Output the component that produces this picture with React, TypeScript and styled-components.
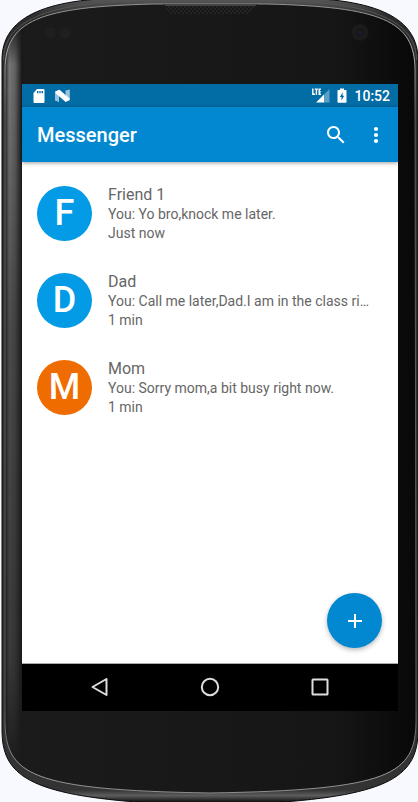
import React from "react";
import styled, { createGlobalStyle } from "styled-components";

const GlobalStyle = createGlobalStyle`
  *, *::before, *::after { box-sizing: border-box; }
  html { background: #f8f9ff; }
  body { margin: 0; font-family: Roboto, "Noto Sans", sans-serif; }
  button { border: 0; padding: 0; background: none; color: inherit; font: inherit; cursor: pointer; }
`;

const Phone = styled.div`
  position: relative;
  display: flex;
  min-height: 100vh;
  padding: 84px 20px 91px 22px;
  overflow: hidden;
`;

const Shell = styled.svg`
  position: absolute;
  inset: 0;
  width: 100%;
  height: 100%;
`;

const Screen = styled.div`
  position: relative;
  display: flex;
  flex: 1;
  min-width: 0;
  flex-direction: column;
  background: #fff;
`;

const StatusBar = styled.div`
  display: flex;
  align-items: center;
  justify-content: space-between;
  height: 23px;
  padding: 0 8px 0 11px;
  background: #026ca5;
  color: #fff;
`;

const StatusGroup = styled.div<{ $gap: number }>`
  display: flex;
  align-items: center;
  gap: ${(p) => p.$gap}px;
`;

const Clock = styled.time`
  font-size: 14px;
  font-weight: 500;
  line-height: 24px;
`;

const Toolbar = styled.header`
  position: relative;
  display: flex;
  align-items: center;
  height: 55px;
  padding: 0 10px 0 15px;
  background: #0288d1;
  color: #fff;
  box-shadow: 0 1px 4px rgba(0, 0, 0, 0.4);
`;

const Title = styled.h1`
  flex: 1;
  margin: 0;
  font-size: 20px;
  font-weight: 500;
`;

const ToolButton = styled.button<{ $width: number }>`
  display: grid;
  place-items: center;
  width: ${(p) => p.$width}px;
  height: 40px;
`;

const ChatList = styled.ul`
  flex: 1;
  margin: 0;
  padding: 8px 0;
  list-style: none;
`;

const ChatRow = styled.li`
  display: flex;
  align-items: center;
  gap: 16px;
  height: 87px;
  padding: 0 20px 0 15px;
`;

const Avatar = styled.div<{ $color: string }>`
  display: grid;
  place-items: center;
  flex: none;
  width: 55px;
  height: 55px;
  border-radius: 50%;
  background: ${(p) => p.$color};
  color: #fff;
  font-size: 36px;
  font-weight: 500;
  line-height: 55px;
`;

const ChatText = styled.div`
  flex: 1;
  min-width: 0;
  color: #666;
`;

const Name = styled.h2`
  margin: 0;
  font-size: 16px;
  font-weight: 400;
  line-height: 20px;
`;

const Line = styled.p`
  margin: 0;
  overflow: hidden;
  font-size: 14px;
  line-height: 19px;
  text-overflow: ellipsis;
  white-space: nowrap;
`;

const ComposeButton = styled.button`
  position: absolute;
  right: 16px;
  bottom: 63px;
  display: grid;
  place-items: center;
  width: 55px;
  height: 55px;
  border-radius: 50%;
  background: #0288d1;
  box-shadow: 0 2px 5px rgba(0, 0, 0, 0.28);
`;

const NavBar = styled.nav`
  display: flex;
  justify-content: center;
  height: 48px;
  border-top: 1px solid #aaa;
  background: #000;
`;

const NavButton = styled.button`
  display: grid;
  place-items: center;
  width: 110px;
  height: 46px;
`;

const OUTER =
  "M2 60 C2 28 25 0 120 -2 L300 -2 C395 0 418 28 418 60 L418 730 C418 775 392 795 270 803 L150 803 C28 795 2 775 2 730 Z";
const INNER =
  "M5 70 C5 20 40 7 153 4 L267 4 C380 7 415 20 415 70 L416 720 C416 775 390 790 210 793 C30 790 5 775 5 720 Z";

function PhoneShell() {
  return (
    <Shell viewBox="0 0 418 802" preserveAspectRatio="none" aria-hidden="true">
      <defs>
        <linearGradient id="side" x1="5" x2="22" y1="0" y2="0" gradientUnits="userSpaceOnUse">
          <stop offset="0" stopColor="#222" />
          <stop offset="0.25" stopColor="#777" />
          <stop offset="0.6" stopColor="#606060" />
          <stop offset="1" stopColor="#181818" />
        </linearGradient>
        <linearGradient id="fall" x1="0" x2="0" y1="20" y2="770" gradientUnits="userSpaceOnUse">
          <stop offset="0" stopColor="#fff" stopOpacity="0" />
          <stop offset="0.06" stopColor="#fff" stopOpacity="1" />
          <stop offset="0.15" stopColor="#fff" stopOpacity="0.9" />
          <stop offset="0.4" stopColor="#fff" stopOpacity="0.55" />
          <stop offset="0.85" stopColor="#fff" stopOpacity="0.35" />
          <stop offset="1" stopColor="#fff" stopOpacity="0" />
        </linearGradient>
        <linearGradient id="face" x1="0" x2="1" y1="0" y2="0">
          <stop offset="0" stopColor="#1b1b1b" />
          <stop offset="0.8" stopColor="#161616" />
          <stop offset="1" stopColor="#080808" />
        </linearGradient>
        <linearGradient id="rim" x1="0" x2="0" y1="0" y2="802" gradientUnits="userSpaceOnUse">
          <stop offset="0" stopColor="#555" />
          <stop offset="0.02" stopColor="#2c2c2c" />
          <stop offset="0.985" stopColor="#333" />
          <stop offset="0.992" stopColor="#5c5c5c" />
          <stop offset="1" stopColor="#111" />
        </linearGradient>
        <linearGradient id="edge" x1="0" x2="0" y1="0" y2="802" gradientUnits="userSpaceOnUse">
          <stop offset="0" stopColor="#909090" />
          <stop offset="0.07" stopColor="#a8a8a8" />
          <stop offset="0.15" stopColor="#606060" />
          <stop offset="0.88" stopColor="#555" />
          <stop offset="0.96" stopColor="#999" />
          <stop offset="1" stopColor="#888" />
        </linearGradient>
        <mask id="fade">
          <rect width="24" height="802" fill="url(#fall)" />
        </mask>
        <clipPath id="faceClip">
          <path d={INNER} />
        </clipPath>
        <pattern id="mesh" width="4" height="4" patternUnits="userSpaceOnUse">
          <rect width="4" height="4" fill="#242424" />
          <circle cx="1" cy="1" r="1" fill="#121212" />
          <circle cx="3" cy="3" r="1" fill="#121212" />
        </pattern>
      </defs>
      <path d={OUTER} fill="url(#rim)" stroke="#0a0a0a" strokeWidth="1" />
      <path d="M3.500 60 C4 25 38 4 130 1 L290 1 C382 4 416 25 416.500 60" fill="none" stroke="#555" />
      <path d={INNER} fill="url(#face)" />
      <g clipPath="url(#faceClip)">
        <rect x="4" width="19" height="802" fill="url(#side)" mask="url(#fade)" />
      </g>
      <path d={INNER} fill="none" stroke="url(#edge)" />
      <path d="M163 4 L169 12 Q170 14 175 14 L244 14 Q249 14 251 11 L258 4 Z" fill="url(#mesh)" />
      <path d="M163 4 L166 6 L255 6 L258 4" fill="#444" />
      <circle cx="50.500" cy="33" r="5.500" fill="#1f1f1f" />
      <circle cx="65" cy="33" r="5.500" fill="#1f1f1f" />
      <circle cx="360" cy="32.500" r="8.500" fill="#1b1b1c" />
      <circle cx="360" cy="32.500" r="3.500" fill="#17171b" />
      <circle cx="360" cy="32.500" r="1.500" fill="#231f33" />
    </Shell>
  );
}

const SdCardIcon = () => (
  <svg width="12" height="14" viewBox="0 0 12 14" aria-label="SD card">
    <path
      fill="#fff"
      fillRule="evenodd"
      d="M4 0H10.500Q11.500 0 11.500 1V13Q11.500 14 10.500 14H1.500Q.5 14 .5 13V4ZM4 2V4.300H5.400V2ZM6.300 2V4.300H7.700V2ZM8.600 2V4.300H10V2Z"
    />
  </svg>
);

const NougatIcon = () => (
  <svg width="15" height="14" viewBox="0 0 15 14" aria-label="Android N">
    <path fill="#9ac4dc" d="M0 2.500L4 1V13L0 11.500ZM10.500 1.500L14.800 .5V11L10.500 12.500Z" />
    <path fill="#fff" d="M.3 2.500L4.500 .8L14.600 9.500V11L10.700 13L.8 4.500Z" />
  </svg>
);

const SignalIcon = () => (
  <svg width="18" height="15" viewBox="0 0 18 15" aria-label="LTE signal">
    <path fill="#5c9fc5" d="M17.500 1V14.500H12V6.500Z" />
    <path fill="#fff" d="M12 6.500V14.500H4Z" />
    <path
      fill="none"
      stroke="#fff"
      strokeWidth="1.400"
      d="M.8 .5V6.200H3M2.700 1.100H6M4.400 1.100V6.800M9 1.100H7.200V6.200H9M7.200 3.700H8.800"
    />
  </svg>
);

const BatteryIcon = () => (
  <svg width="10" height="15" viewBox="0 0 10 15" aria-label="Battery charging">
    <path
      fill="#fff"
      fillRule="evenodd"
      d="M3 .5H7V2H9Q9.500 2 9.500 2.700V14Q9.500 14.700 8.800 14.700H1.200Q.5 14.700 .5 14V2.700Q.5 2 1.200 2H3ZM5.600 4.300L2.900 9H4.500V12.500L7.200 7.700H5.600Z"
    />
  </svg>
);

const SearchIcon = () => (
  <svg width="24" height="24" viewBox="0 0 24 24" fill="#fff" aria-hidden="true">
    <path d="M15.500 14h-.79l-.28-.27C15.410 12.590 16 11.110 16 9.500 16 5.910 13.090 3 9.500 3S3 5.910 3 9.500 5.910 16 9.500 16c1.610 0 3.090-.59 4.230-1.570l.27.28v.79l5 4.990L20.490 19l-4.990-5zm-6 0C7.010 14 5 11.990 5 9.500S7.010 5 9.500 5 14 7.010 14 9.500 11.990 14 9.500 14z" />
  </svg>
);

const MoreIcon = () => (
  <svg width="24" height="24" viewBox="0 0 24 24" fill="#fff" aria-hidden="true">
    <circle cx="12" cy="6" r="2.100" />
    <circle cx="12" cy="12" r="2.100" />
    <circle cx="12" cy="18" r="2.100" />
  </svg>
);

const PlusIcon = () => (
  <svg width="24" height="24" viewBox="0 0 24 24" stroke="#fff" strokeWidth="2" aria-hidden="true">
    <path d="M12 5V19M5 12H19" />
  </svg>
);

const NAV = [
  { label: "Back", shape: <path d="M4.500 12L18.500 4V20Z" /> },
  { label: "Home", shape: <circle cx="12" cy="12" r="8.200" /> },
  { label: "Overview", shape: <rect x="4.500" y="4.500" width="15" height="15" rx="0.500" /> },
];

const CHATS = [
  { name: "Friend 1", initial: "F", color: "#039be5", message: "You: Yo bro,knock me later.", when: "Just now" },
  {
    name: "Dad",
    initial: "D",
    color: "#039be5",
    message: "You: Call me later,Dad.I am in the class ri…",
    when: "1 min",
  },
  { name: "Mom", initial: "M", color: "#ef6c00", message: "You: Sorry mom,a bit busy right now.", when: "1 min" },
];

export default function App() {
  return (
    <>
      <GlobalStyle />
      <Phone>
        <PhoneShell />
        <Screen>
          <StatusBar>
            <StatusGroup $gap={10}>
              <SdCardIcon />
              <NougatIcon />
            </StatusGroup>
            <StatusGroup $gap={7}>
              <SignalIcon />
              <BatteryIcon />
              <Clock>10:52</Clock>
            </StatusGroup>
          </StatusBar>
          <Toolbar>
            <Title>Messenger</Title>
            <ToolButton $width={56} aria-label="Search">
              <SearchIcon />
            </ToolButton>
            <ToolButton $width={24} aria-label="More options">
              <MoreIcon />
            </ToolButton>
          </Toolbar>
          <ChatList>
            {CHATS.map((chat) => (
              <ChatRow key={chat.name}>
                <Avatar $color={chat.color}>{chat.initial}</Avatar>
                <ChatText>
                  <Name>{chat.name}</Name>
                  <Line>{chat.message}</Line>
                  <Line>{chat.when}</Line>
                </ChatText>
              </ChatRow>
            ))}
          </ChatList>
          <ComposeButton aria-label="New message">
            <PlusIcon />
          </ComposeButton>
          <NavBar>
            {NAV.map((item) => (
              <NavButton key={item.label} aria-label={item.label}>
                <svg
                  width="24"
                  height="24"
                  viewBox="0 0 24 24"
                  fill="none"
                  stroke="#ddd"
                  strokeWidth="2"
                  strokeLinejoin="round"
                  aria-hidden="true"
                >
                  {item.shape}
                </svg>
              </NavButton>
            ))}
          </NavBar>
        </Screen>
      </Phone>
    </>
  );
}
